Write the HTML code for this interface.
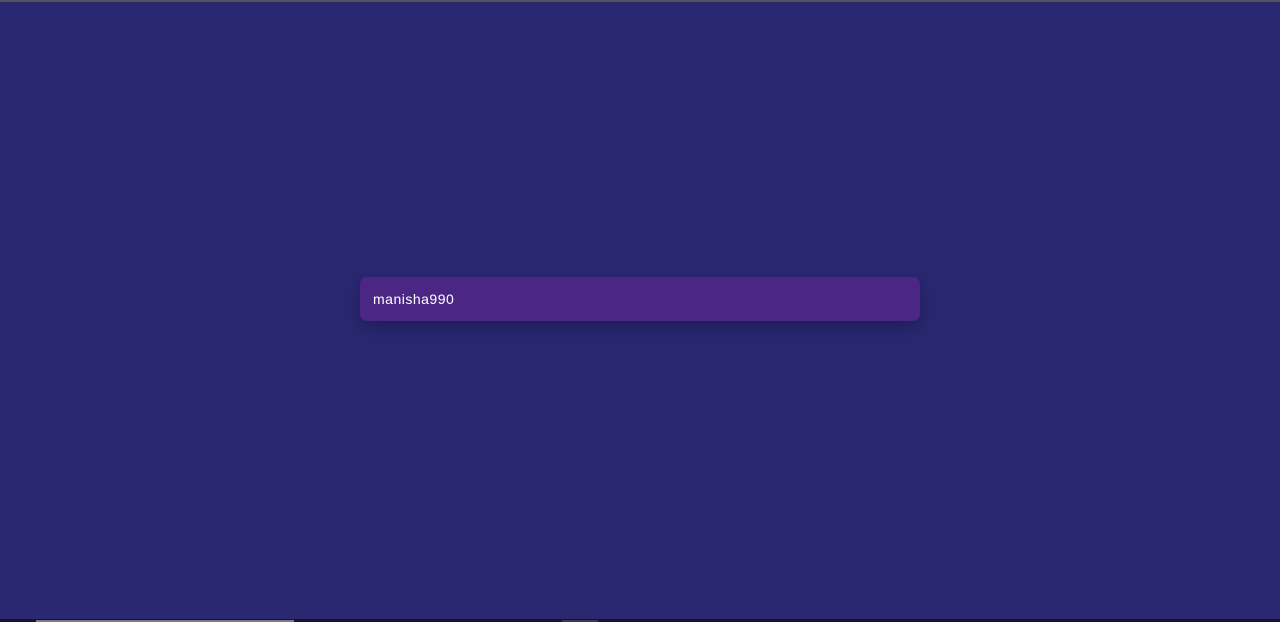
<!DOCTYPE html>
<html><head><style>
html,body{margin:0;padding:0;width:1280px;height:622px;overflow:hidden;background:#2a2870;font-family:"Liberation Sans",sans-serif;}
.top{position:absolute;left:0;top:0;width:1280px;height:2px;background:#55545a;}
.box{position:absolute;left:360px;top:277px;width:560px;height:44px;background:#4b2683;border-radius:7px;box-shadow:0 6px 16px rgba(20,18,70,0.5);}
.box span{position:absolute;left:13px;top:14px;color:#fff;font-size:14px;letter-spacing:0.5px;}
.bot{position:absolute;left:0;top:619px;width:1280px;height:3px;background:#141333;}
.bar{position:absolute;left:36px;top:620px;width:258px;height:2px;background:#7a7a80;}
.bar2{position:absolute;left:562px;top:620px;width:36px;height:2px;background:#3a3a48;}
</style></head><body>
<div class="top"></div>
<div class="box"><span>manisha990</span></div>
<div class="bot"></div><div class="bar"></div><div class="bar2"></div>
</body></html>
